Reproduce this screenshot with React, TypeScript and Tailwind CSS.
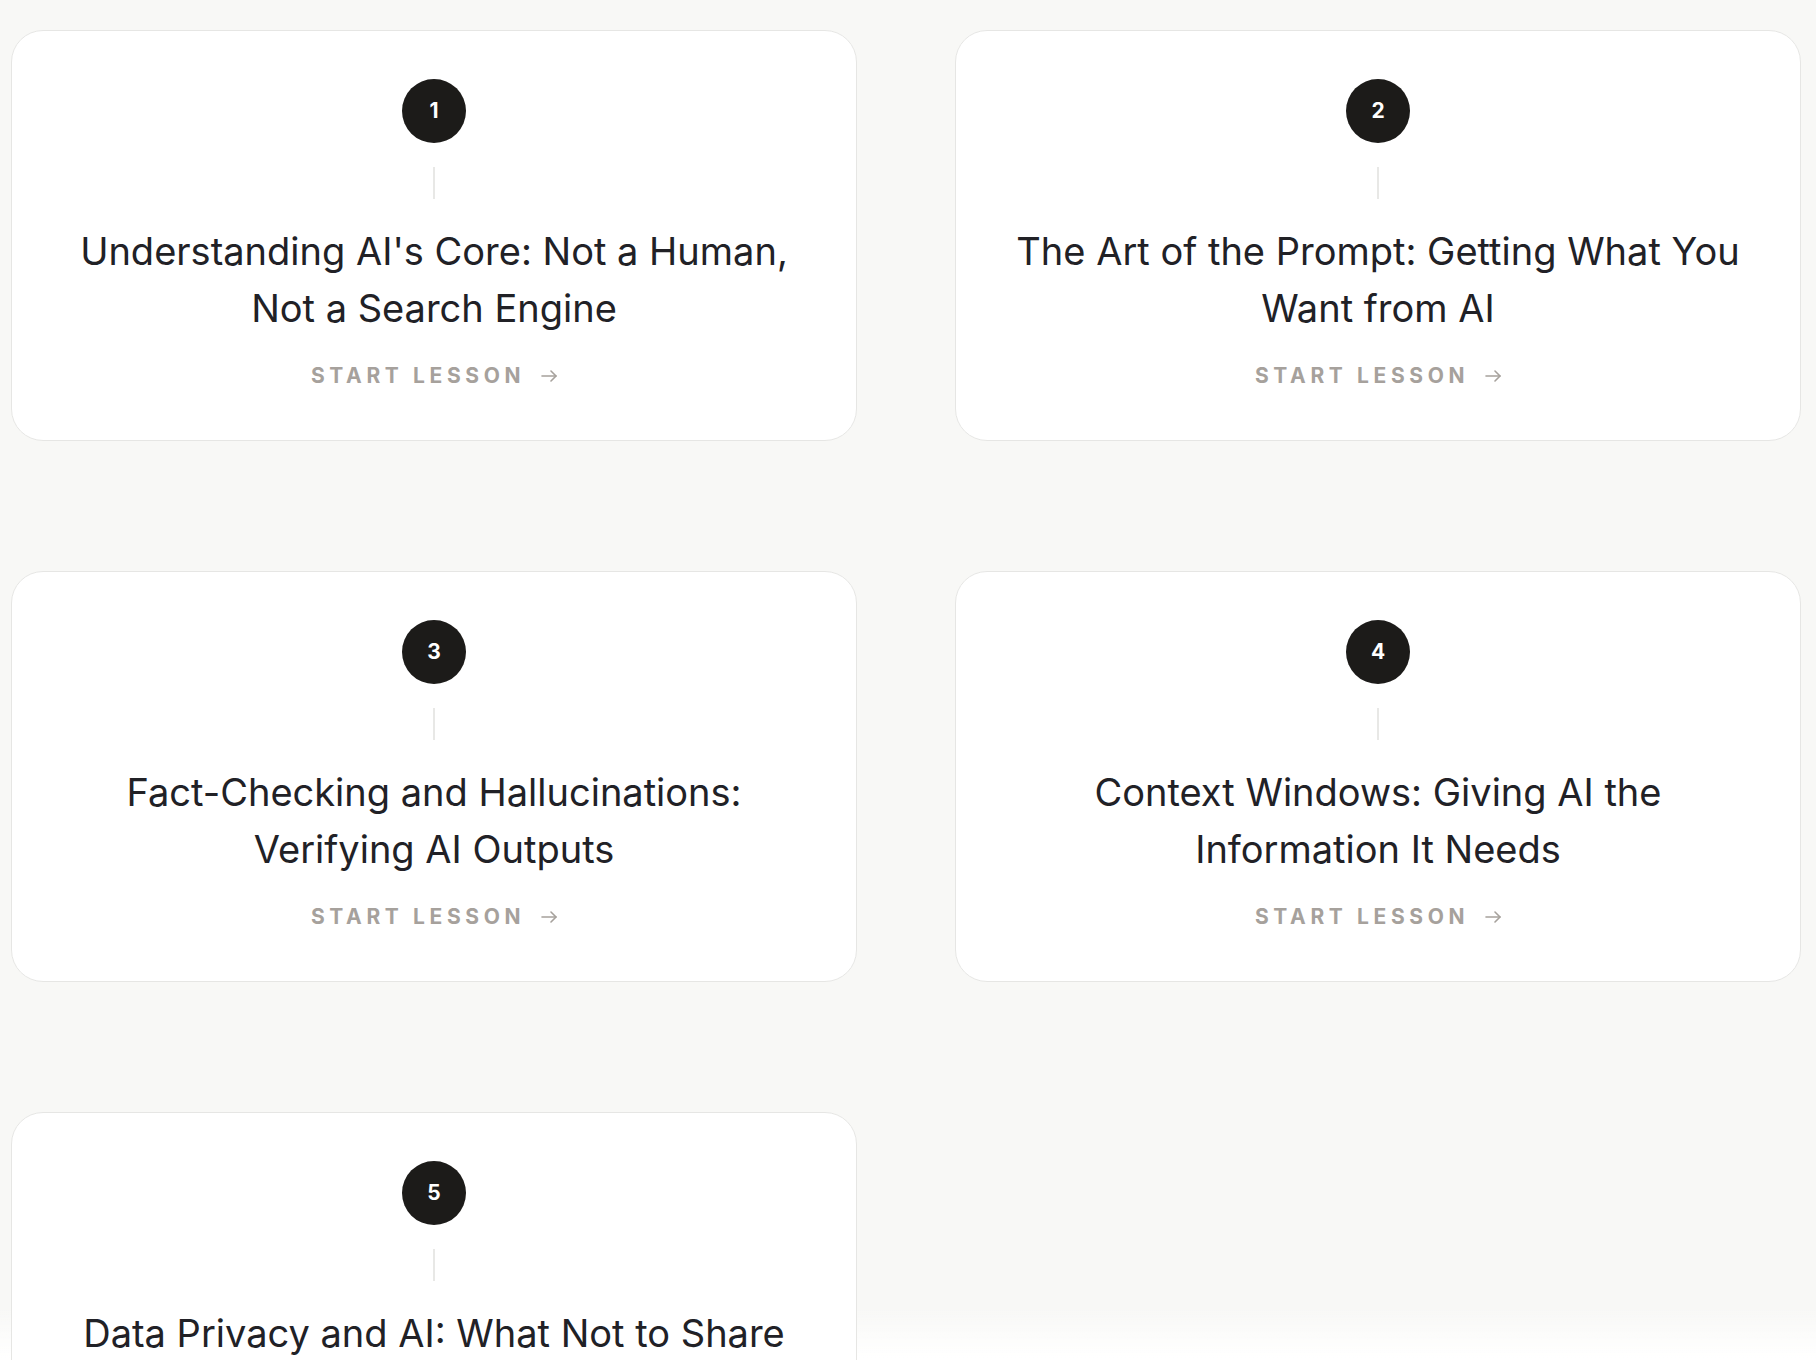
import React from "react";

const lessons = [
  "Understanding AI's Core: Not a Human, Not a Search Engine",
  "The Art of the Prompt: Getting What You Want from AI",
  "Fact-Checking and Hallucinations: Verifying AI Outputs",
  "Context Windows: Giving AI the Information It Needs",
  "Data Privacy and AI: What Not to Share",
];

function Arrow() {
  return (
    <svg width="16" height="12" viewBox="0 0 16 12" fill="none" stroke="currentColor" strokeWidth="1.6" strokeLinecap="round" strokeLinejoin="round">
      <path d="M1 6h14" />
      <path d="M10 1l5 5-5 5" />
    </svg>
  );
}

function Card({ n, title }: { n: number; title: string }) {
  return (
    <div className="flex flex-col items-center rounded-[32px] border border-[#e6e6e4] bg-white px-12 pt-12 pb-[50px] text-center">
      <div className="flex h-16 w-16 items-center justify-center rounded-full bg-[#1c1b19] text-[21px] font-bold text-white">
        {n}
      </div>
      <div className="mt-6 h-8 w-[2px] bg-[#e8e8e6]" />
      <h3 className="mt-6 text-[38px] font-normal leading-[57px] text-[#212126]">{title}</h3>
      <div className="mt-6 flex items-center gap-[16px] text-[21px] font-bold uppercase leading-[29px] tracking-[0.22em] text-[#a6a19c]">
        <span>Start Lesson</span>
        <Arrow />
      </div>
    </div>
  );
}

export default function App() {
  return (
    <div className="relative min-h-screen bg-[#f8f8f6]" style={{ fontFamily: "Inter, 'Noto Sans', sans-serif" }}>
      <div className="pointer-events-none fixed inset-x-0 bottom-0 z-0 h-[56px] bg-gradient-to-t from-white to-transparent" />
      <div className="relative z-10 grid grid-cols-2 gap-x-[98px] gap-y-[130px] pl-[11px] pr-[15px] pt-[30px] pb-16">
        {lessons.map((t, i) => (
          <Card key={i} n={i + 1} title={t} />
        ))}
      </div>
    </div>
  );
}
